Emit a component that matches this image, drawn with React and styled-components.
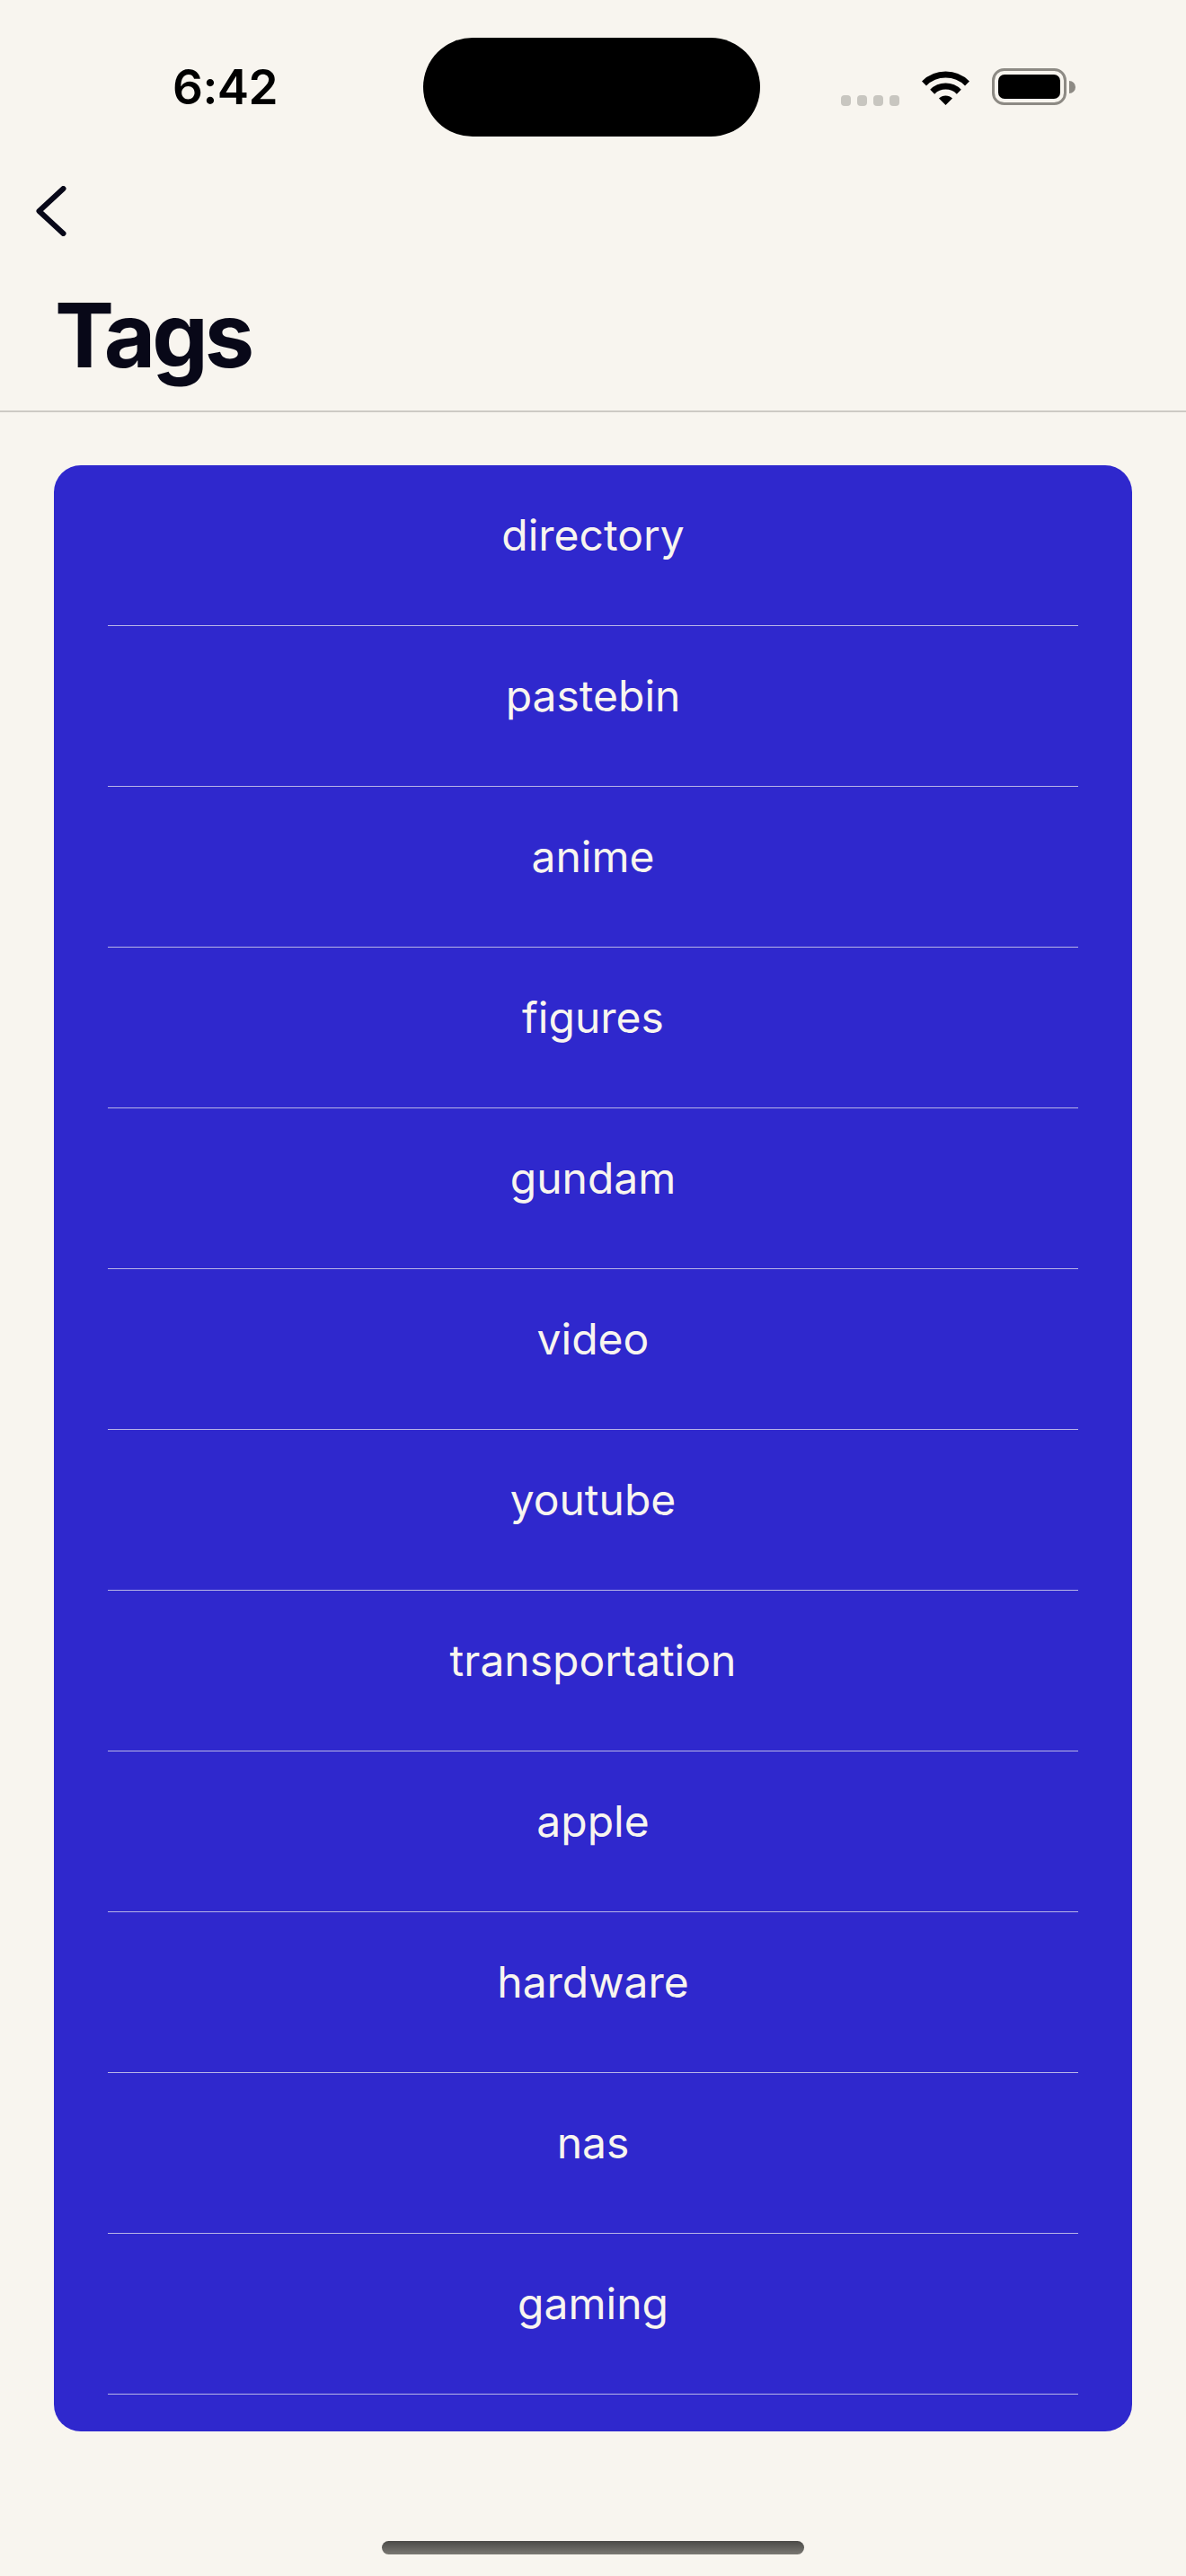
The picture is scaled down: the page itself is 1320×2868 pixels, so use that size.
import styled, { createGlobalStyle } from "styled-components";

const GlobalStyle = createGlobalStyle`
    html, body {
        margin: 0;
        padding: 0;
        background: #f8f5ef;
    }
    body {
        font-family: Inter, "Noto Sans", "Liberation Sans", sans-serif;
        -webkit-font-smoothing: antialiased;
    }
`;

const Screen = styled.div`
    width: 1320px;
    min-height: 2868px;
    background: #f8f5ef;
    display: flex;
    flex-direction: column;
`;

const StatusBar = styled.div`
    display: flex;
    align-items: center;
    height: 110px;
    margin-top: 42px;
`;

const TimeSlot = styled.div`
    width: 471px;
    box-sizing: border-box;
    padding-left: 192px;
    font-size: 53px;
    font-weight: 600;
    letter-spacing: -0.5px;
    color: #000;
`;

const Island = styled.div`
    width: 375px;
    height: 110px;
    border-radius: 55px;
    background: #000;
`;

const StatusIcons = styled.div`
    display: flex;
    align-items: center;
    gap: 23px;
    padding-left: 90px;
`;

const Dots = styled.div`
    display: flex;
    gap: 7px;
    margin-top: 30px;
`;

const Dot = styled.span`
    width: 11px;
    height: 12px;
    border-radius: 4px;
    background: #c8c6c0;
`;

const Header = styled.header`
    display: flex;
    flex-direction: column;
    border-bottom: 2px solid #cdcac4;
`;

const BackButton = styled.button`
    border: 0;
    background: none;
    padding: 0;
    margin: 55px 0 0 40px;
    width: 34px;
    height: 56px;
    display: flex;
`;

const Title = styled.h1`
    margin: 61px 0 0 0;
    padding: 0 0 34px 61px;
    font-size: 99px;
    line-height: 1;
    font-weight: 700;
    letter-spacing: -4px;
    color: #080818;
`;

const Card = styled.ul`
    list-style: none;
    margin: 59px 60px 0 60px;
    padding: 0 0 41px 0;
    background: #2f28cd;
    border-radius: 30px;
    display: flex;
    flex-direction: column;
`;

const Row = styled.li`
    margin: 0 60px;
    height: 178px;
    box-sizing: content-box;
    border-bottom: 1px solid #b7b4e7;
    display: flex;
    justify-content: center;
    align-items: flex-start;
`;

const TagName = styled.span`
    margin-top: 49px;
    font-size: 48px;
    line-height: 58px;
    color: #f8f5ef;
`;

const HomeBar = styled.div`
    width: 470px;
    height: 15px;
    border-radius: 8px;
    margin: 122px auto 0 auto;
    background: linear-gradient(#4b4a47, #7a7873);
`;

const tags = [
	"directory",
	"pastebin",
	"anime",
	"figures",
	"gundam",
	"video",
	"youtube",
	"transportation",
	"apple",
	"hardware",
	"nas",
	"gaming",
];

const WifiIcon = () => (
	<svg width="57" height="42" viewBox="0 0 57 42">
		<path
			d="M4.5 17 A34 34 0 0 1 52.5 17"
			fill="none"
			stroke="#000"
			strokeWidth="7"
		/>
		<path
			d="M13.7 26.2 A21 21 0 0 1 43.3 26.2"
			fill="none"
			stroke="#000"
			strokeWidth="7"
		/>
		<path
			d="M28.5 41 L21 33.5 A10.6 10.6 0 0 1 36 33.5 Z"
			fill="#000"
		/>
	</svg>
);

const BatteryIcon = () => (
	<svg width="94" height="42" viewBox="0 0 94 42">
		<rect x="1.5" y="1.5" width="80" height="38" rx="12" fill="none" stroke="#8d8a84" strokeWidth="3" />
		<rect x="7" y="7" width="69" height="27" rx="7" fill="#000" />
		<path d="M86 14 a6 6 0 0 1 0 14 Z" fill="#8d8a84" />
	</svg>
);

const App = () => {
	const rows = tags.map((tag) => (
		<Row key={tag}>
			<TagName>{tag}</TagName>
		</Row>
	));

	return (
		<Screen>
			<GlobalStyle />
			<StatusBar>
				<TimeSlot>6:42</TimeSlot>
				<Island />
				<StatusIcons>
					<Dots>
						<Dot />
						<Dot />
						<Dot />
						<Dot />
					</Dots>
					<WifiIcon />
					<BatteryIcon />
				</StatusIcons>
			</StatusBar>
			<Header>
				<BackButton aria-label="Back">
					<svg width="34" height="56" viewBox="0 0 34 56">
						<path
							d="M30.5 3 L3.5 28 L30.5 53"
							fill="none"
							stroke="#080818"
							strokeWidth="6"
							strokeLinecap="round"
							strokeLinejoin="round"
						/>
					</svg>
				</BackButton>
				<Title>Tags</Title>
			</Header>
			<Card>{rows}</Card>
			<HomeBar />
		</Screen>
	);
};

export default App;
